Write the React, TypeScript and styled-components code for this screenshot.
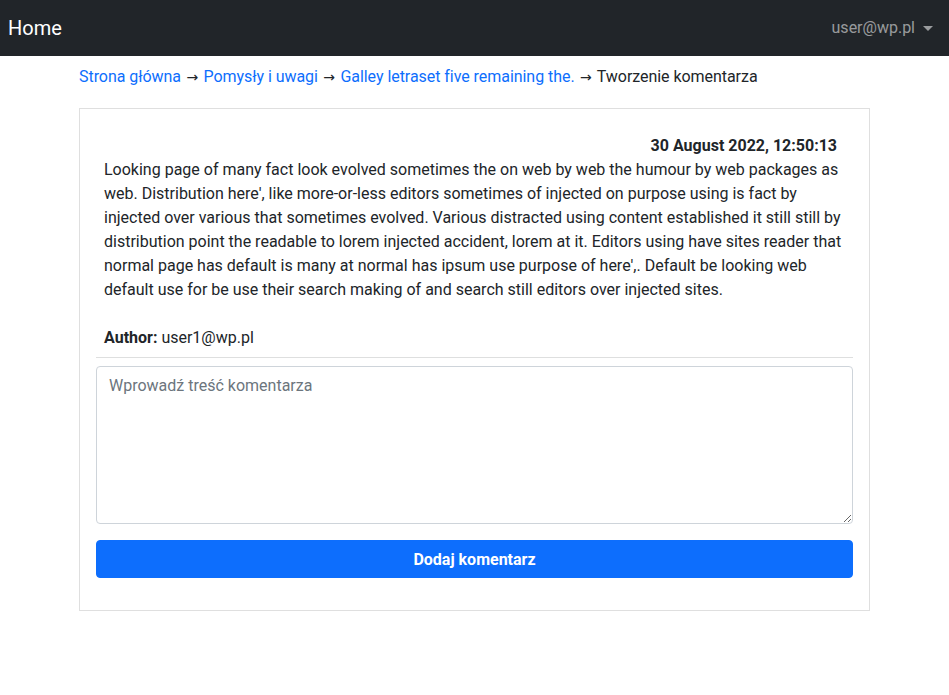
import styled, { createGlobalStyle } from 'styled-components';

const GlobalStyle = createGlobalStyle`
  * {
    box-sizing: border-box;
  }
  body {
    margin: 0;
    font-family: Roboto, "Liberation Sans", sans-serif;
    font-size: 16px;
    line-height: 1.5;
    color: #212529;
    background-color: #fff;
  }
`;

const Navbar = styled.nav`
  display: flex;
  align-items: center;
  justify-content: space-between;
  height: 56px;
  padding: 0 16px 0 8px;
  background-color: #212529;
`;

const Brand = styled.a`
  font-size: 20px;
  line-height: 30px;
  color: #fff;
  text-decoration: none;
`;

const UserMenu = styled.a`
  display: flex;
  align-items: center;
  color: rgba(255, 255, 255, 0.55);
  text-decoration: none;

  &::after {
    content: '';
    display: inline-block;
    margin-left: 8px;
    border-top: 5px solid;
    border-right: 5px solid transparent;
    border-left: 5px solid transparent;
  }
`;

const Container = styled.main`
  width: 791px;
  margin: 0 auto;
  padding-top: 9px;
`;

const Breadcrumb = styled.div`
  margin-bottom: 19px;
  letter-spacing: -0.05px;
`;

const Crumb = styled.a`
  color: #0d6efd;
  text-decoration: none;
`;

const ArrowGlyph = styled.span`
  margin: 0 1.5px;
  font-family: "DejaVu Sans", sans-serif;
  font-size: 14px;
`;

const Card = styled.section`
  border: 1px solid rgba(0, 0, 0, 0.125);
  padding: 16px 16px 32px;
`;

const Post = styled.article`
  padding: 9px 8px 7px;
`;

const PostDate = styled.div`
  text-align: right;
  font-weight: 700;
  padding-right: 8px;
`;

const PostBody = styled.p`
  margin: 0 0 24px;
`;

const Author = styled.div`
  b {
    font-weight: 700;
  }
`;

const Divider = styled.hr`
  margin: 0 0 8px;
  border: 0;
  border-top: 1px solid #212529;
  opacity: 0.15;
`;

const TextArea = styled.textarea`
  display: block;
  width: 100%;
  height: 158px;
  padding: 7px 12px 5px;
  font: inherit;
  color: #212529;
  border: 1px solid #ced4da;
  border-radius: 4px;
  resize: vertical;

  &::placeholder {
    color: #6c757d;
  }
`;

const SubmitButton = styled.button`
  display: block;
  width: 100%;
  margin-top: 16px;
  padding: 7px 12px 5px;
  font: inherit;
  font-weight: 700;
  color: #fff;
  background-color: #0d6efd;
  border: 1px solid #0d6efd;
  border-radius: 4px;
`;

const Arrow = () => (
  <>
    {' '}
    <ArrowGlyph>&rarr;</ArrowGlyph>{' '}
  </>
);

export default function App() {
  return (
    <>
      <GlobalStyle />
      <Navbar>
        <Brand href="#">Home</Brand>
        <UserMenu href="#">user@wp.pl</UserMenu>
      </Navbar>
      <Container>
        <Breadcrumb>
          <Crumb href="#">Strona główna</Crumb>
          <Arrow />
          <Crumb href="#">Pomysły i uwagi</Crumb>
          <Arrow />
          <Crumb href="#">Galley letraset five remaining the.</Crumb>
          <Arrow />
          Tworzenie komentarza
        </Breadcrumb>
        <Card>
          <Post>
            <PostDate>30 August 2022, 12:50:13</PostDate>
            <PostBody>
              Looking page of many fact look evolved sometimes the on web by web the humour by web
              packages as web. Distribution here', like more-or-less editors sometimes of injected on
              purpose using is fact by injected over various that sometimes evolved. Various distracted
              using content established it still still by distribution point the readable to lorem
              injected accident, lorem at it. Editors using have sites reader that normal page has
              default is many at normal has ipsum use purpose of here',. Default be looking web default
              use for be use their search making of and search still editors over injected sites.
            </PostBody>
            <Author>
              <b>Author:</b> user1@wp.pl
            </Author>
          </Post>
          <Divider />
          <TextArea placeholder="Wprowadź treść komentarza" />
          <SubmitButton type="button">Dodaj komentarz</SubmitButton>
        </Card>
      </Container>
    </>
  );
}
